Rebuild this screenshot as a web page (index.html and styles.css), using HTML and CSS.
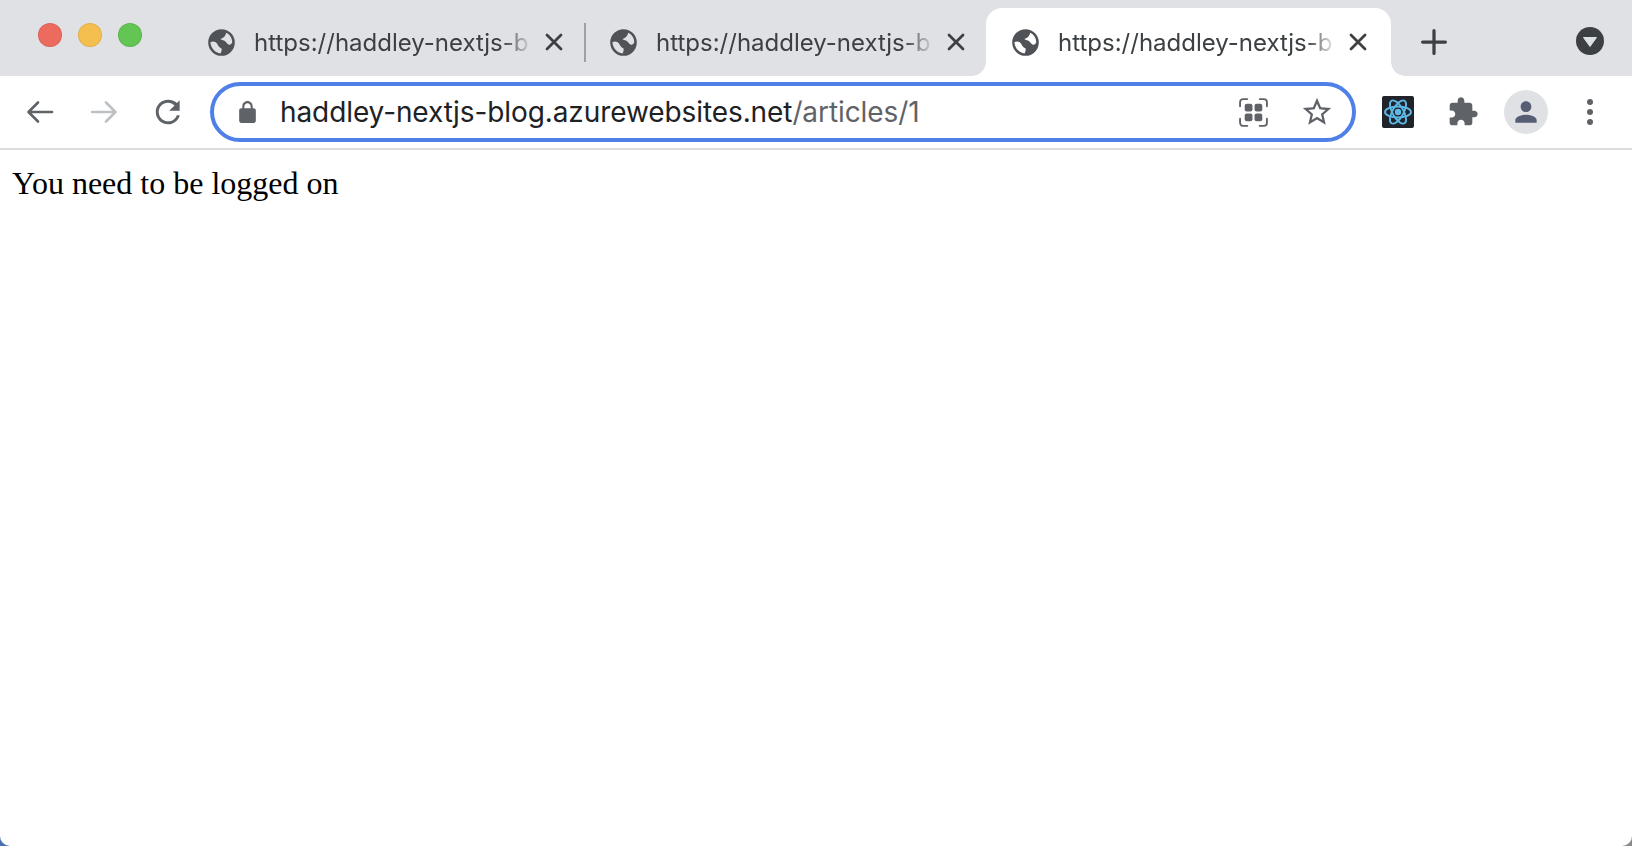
FILE: index.html
```html
<!DOCTYPE html>
<html lang="en">

<head>
	<meta charset="UTF-8">
	<meta name="viewport" content="width=device-width, initial-scale=1.0">
	<title>You need to be logged on</title>
	<link rel="stylesheet" href="styles.css">
</head>

<body>
	<svg class="defs" width="0" height="0">
		<symbol id="globe" viewBox="0 0 24 24">
			<path fill-rule="evenodd" d="M12 1a11 11 0 1 0 0 22 11 11 0 0 0 0-22zM2.900 11.600c2.300-.9 4.300-.3 5.400 1.200 1 1.500 1.500 3.500 3.600 3.900.5 1.200.2 2.800-.7 4.300-4.500-.6-8-4.300-8.300-8.800zM15.900 3.900c2.900 1.400 4.900 4.300 5 7.700-.2 1.300-1.600 2.800-3.200 2-1.500-.8-2-2.700-3.300-3.100-1.400-.5-2.600-.4-3.400-1.300 1.400-.6 3.900-1.300 4.900-5.300z" />
		</symbol>
		<symbol id="close" viewBox="0 0 24 24">
			<path d="M5 5l14 14M19 5L5 19" fill="none" stroke="currentColor" stroke-width="2.800" stroke-linecap="round" />
		</symbol>
	</svg>

	<div class="window">
		<div class="tabstrip">
			<div class="traffic">
				<span class="light red"></span>
				<span class="light yellow"></span>
				<span class="light green"></span>
			</div>
			<div class="tab">
				<svg class="favicon"><use href="#globe" /></svg>
				<span class="tab-title">https://haddley-nextjs-b</span>
				<svg class="tab-close"><use href="#close" /></svg>
				<span class="tab-sep"></span>
			</div>
			<div class="tab">
				<svg class="favicon"><use href="#globe" /></svg>
				<span class="tab-title">https://haddley-nextjs-b</span>
				<svg class="tab-close"><use href="#close" /></svg>
			</div>
			<div class="tab active">
				<svg class="favicon"><use href="#globe" /></svg>
				<span class="tab-title">https://haddley-nextjs-b</span>
				<svg class="tab-close"><use href="#close" /></svg>
			</div>
			<svg class="new-tab" viewBox="0 0 24 24">
				<path d="M12 1.500v21M1.500 12h21" fill="none" stroke="currentColor" stroke-width="3" stroke-linecap="round" />
			</svg>
			<svg class="tab-search" viewBox="0 0 28 28">
				<circle cx="14" cy="14" r="14" fill="#3c4043" />
				<path d="M7.500 10.500h13L14 19.500z" fill="#dfe1e5" stroke="#dfe1e5" stroke-linejoin="round" />
			</svg>
		</div>

		<div class="toolbar">
			<svg class="nav-icon" viewBox="0 0 28 28">
				<path d="M26 14H3M12 4.500L2.500 14l9.500 9.500" fill="none" stroke="currentColor" stroke-width="2.600" stroke-linecap="round" stroke-linejoin="round" />
			</svg>
			<svg class="nav-icon disabled" viewBox="0 0 28 28">
				<path d="M2 14h23M16 4.500l9.500 9.500-9.500 9.500" fill="none" stroke="currentColor" stroke-width="2.600" stroke-linecap="round" stroke-linejoin="round" />
			</svg>
			<svg class="nav-icon" viewBox="0 0 24 24">
				<path fill="currentColor" d="M19.650 4.350C18.200 2.900 15.210 1.500 12 1.500 6.200 1.500 1.500 6.200 1.500 12S6.200 22.500 12 22.500c4.900 0 8.900-3.300 10.100-7.800h-2.500c-1.100 3.100-4.100 5.300-7.600 5.300-4.400 0-8-3.600-8-8s3.600-8 8-8c2.200 0 4.200 1 5.600 2.400L13 11h9V2z" />
			</svg>

			<div class="omnibox">
				<svg class="lock" viewBox="0 0 24 24">
					<path fill="currentColor" d="M18 8h-1V6c0-2.760-2.240-5-5-5S7 3.240 7 6v2H6c-1.100 0-2 .9-2 2v10c0 1.100.9 2 2 2h12c1.100 0 2-.9 2-2V10c0-1.100-.9-2-2-2zM9 6c0-1.660 1.340-3 3-3s3 1.340 3 3v2H9V6z" />
				</svg>
				<span class="url">haddley-nextjs-blog.azurewebsites.net<span class="url-path">/articles/1</span></span>
				<svg class="omni-icon" viewBox="0 0 30 30">
					<g fill="none" stroke="currentColor" stroke-width="1.800" stroke-linecap="round">
						<path d="M2 9V5a3 3 0 0 1 3-3h4M21 2h4a3 3 0 0 1 3 3v4M28 21v4a3 3 0 0 1-3 3h-4M9 28H5a3 3 0 0 1-3-3v-4" />
					</g>
					<rect x="6.500" y="6.500" width="7.500" height="7.500" rx="2" fill="currentColor" />
					<rect x="16" y="6.500" width="7.500" height="7.500" rx="2" fill="currentColor" />
					<rect x="6.500" y="16" width="7.500" height="7.500" rx="2" fill="currentColor" />
					<rect x="16" y="16" width="7.500" height="7.500" rx="2" fill="currentColor" />
				</svg>
				<svg class="omni-icon star" viewBox="0 0 24 24">
					<path fill="currentColor" d="M22 9.240l-7.190-.62L12 2 9.190 8.630 2 9.240l5.460 4.730L5.820 21 12 17.270 18.180 21l-1.630-7.030L22 9.240zM12 15.400l-3.760 2.270 1-4.280-3.320-2.880 4.380-.38L12 6.100l1.710 4.040 4.380.38-3.320 2.880 1 4.280L12 15.400z" />
				</svg>
			</div>

			<svg class="react-ext" viewBox="0 0 32 32">
				<rect width="32" height="32" rx="2" fill="#20232a" />
				<circle cx="16" cy="16" r="3.200" fill="#5db9e6" />
				<g fill="none" stroke="#5db9e6" stroke-width="1.900">
					<ellipse cx="16" cy="16" rx="13" ry="5.500" />
					<ellipse cx="16" cy="16" rx="13" ry="5.500" transform="rotate(60 16 16)" />
					<ellipse cx="16" cy="16" rx="13" ry="5.500" transform="rotate(120 16 16)" />
				</g>
			</svg>
			<svg class="puzzle" viewBox="0 0 24 24">
				<path fill="currentColor" d="M20.500 11H19V7c0-1.100-.9-2-2-2h-4V3.500C13 2.120 11.880 1 10.500 1S8 2.120 8 3.500V5H4c-1.100 0-1.990.9-1.990 2v3.800H3.500c1.490 0 2.700 1.210 2.700 2.700s-1.210 2.700-2.700 2.700H2V20c0 1.100.9 2 2 2h3.800v-1.500c0-1.490 1.210-2.700 2.700-2.700 1.490 0 2.700 1.210 2.700 2.700V22H17c1.100 0 2-.9 2-2v-4h1.500c1.380 0 2.500-1.120 2.500-2.500S21.880 11 20.500 11z" />
			</svg>
			<div class="avatar">
				<svg viewBox="0 0 24 24">
					<path fill="currentColor" d="M12 12c2.210 0 4-1.790 4-4s-1.790-4-4-4-4 1.790-4 4 1.790 4 4 4zm0 2c-2.670 0-8 1.340-8 4v2h16v-2c0-2.660-5.330-4-8-4z" />
				</svg>
			</div>
			<div class="menu-dots">
				<span></span>
				<span></span>
				<span></span>
			</div>
		</div>

		<div class="page">You need to be logged on</div>
	</div>
</body>

</html>
```

FILE: styles.css
```css
html,
body {
	height: 100%;
}

body {
	margin: 0;
	background: linear-gradient(90deg, #4a6fb0, #8a8a8a);
	overflow: hidden;
}

.defs {
	position: absolute;
}

.window {
	height: 100%;
	display: flex;
	flex-direction: column;
	background: #fff;
	border-radius: 0 0 10px 10px;
	overflow: hidden;
}

.tabstrip {
	height: 76px;
	flex: none;
	display: flex;
	align-items: flex-end;
	background: #dfe1e5;
	color: #3c4043;
	font-family: Inter, Roboto, "Liberation Sans", sans-serif;
}

.traffic {
	width: 183px;
	height: 76px;
	flex: none;
	box-sizing: border-box;
	padding: 23px 0 0 38px;
	display: flex;
	gap: 16px;
}

.light {
	width: 24px;
	height: 24px;
	box-sizing: border-box;
	border-radius: 50%;
	border: 1px solid rgba(0, 0, 0, 0.08);
}

.red {
	background: #ed6a5e;
}

.yellow {
	background: #f5bf4f;
}

.green {
	background: #62c554;
}

.tab {
	width: 402px;
	height: 68px;
	flex: none;
	box-sizing: border-box;
	padding: 0 20px 0 24px;
	display: flex;
	align-items: center;
	position: relative;
	border-radius: 16px 16px 0 0;
}

.tab.active {
	width: 405px;
	margin-left: -1px;
	padding-left: 25px;
	background: #fff;
}

/* inverted corners where the active tab meets the toolbar */
.tab.active::before,
.tab.active::after {
	content: "";
	position: absolute;
	bottom: 0;
	width: 14px;
	height: 14px;
}

.tab.active::before {
	left: -14px;
	background: radial-gradient(circle at 0 0, #dfe1e5 13.500px, #fff 14px);
}

.tab.active::after {
	right: -14px;
	background: radial-gradient(circle at 100% 0, #dfe1e5 13.500px, #fff 14px);
}

.tab-sep {
	position: absolute;
	right: -1px;
	top: 15px;
	width: 2px;
	height: 39px;
	background: #9aa0a6;
}

.favicon {
	width: 29px;
	height: 29px;
	flex: none;
	fill: #4f5257;
}

.tab-title {
	width: 274px;
	margin-left: 18px;
	font-size: 24px;
	white-space: nowrap;
	-webkit-mask-image: linear-gradient(90deg, #000 91%, rgba(0, 0, 0, 0.15));
	mask-image: linear-gradient(90deg, #000 91%, rgba(0, 0, 0, 0.15));
}

.tab-close {
	width: 24px;
	height: 24px;
	flex: none;
	margin-left: 14px;
}

.new-tab {
	width: 26px;
	height: 26px;
	flex: none;
	margin: 0 0 21px 30px;
}

.tab-search {
	width: 28px;
	height: 28px;
	flex: none;
	margin: 0 28px 21px auto;
}

.toolbar {
	height: 72px;
	flex: none;
	display: flex;
	align-items: center;
	padding-left: 26px;
	border-bottom: 2px solid #dcdcdc;
	color: #5f6368;
}

.nav-icon {
	width: 28px;
	height: 28px;
	flex: none;
	margin-right: 36px;
}

.nav-icon.disabled {
	color: #bdc1c6;
}

.omnibox {
	width: 1146px;
	height: 60px;
	flex: none;
	margin-left: -8px;
	box-sizing: border-box;
	border: 4px solid #4e80e8;
	border-radius: 30px;
	display: flex;
	align-items: center;
	padding-left: 21px;
}

.lock {
	width: 25px;
	height: 25px;
	flex: none;
}

.url {
	margin-left: 20px;
	flex: 1;
	font-family: Inter, Roboto, "Liberation Sans", sans-serif;
	font-size: 28px;
	letter-spacing: -0.09px;
	color: #202124;
	white-space: nowrap;
}

.url-path {
	color: #5f6368;
}

.omni-icon {
	width: 31px;
	height: 31px;
	flex: none;
	margin-right: 31px;
}

.omni-icon.star {
	width: 34px;
	height: 34px;
	margin-right: 18px;
}

.react-ext {
	width: 32px;
	height: 32px;
	flex: none;
	margin-left: 26px;
}

.puzzle {
	width: 32px;
	height: 32px;
	flex: none;
	margin-left: 33px;
}

.avatar {
	width: 44px;
	height: 44px;
	flex: none;
	margin-left: 25px;
	border-radius: 50%;
	background: #dfe1e5;
	color: #555e73;
	display: flex;
	align-items: center;
	justify-content: center;
}

.avatar svg {
	width: 32px;
	height: 32px;
}

.menu-dots {
	margin-left: 39px;
	display: flex;
	flex-direction: column;
	gap: 4px;
}

.menu-dots span {
	width: 6px;
	height: 6px;
	border-radius: 50%;
	background: #5f6368;
}

.page {
	flex: 1;
	padding: 15px 12px;
	font-family: "Liberation Serif", serif;
	font-size: 32px;
	color: #000;
}
```
